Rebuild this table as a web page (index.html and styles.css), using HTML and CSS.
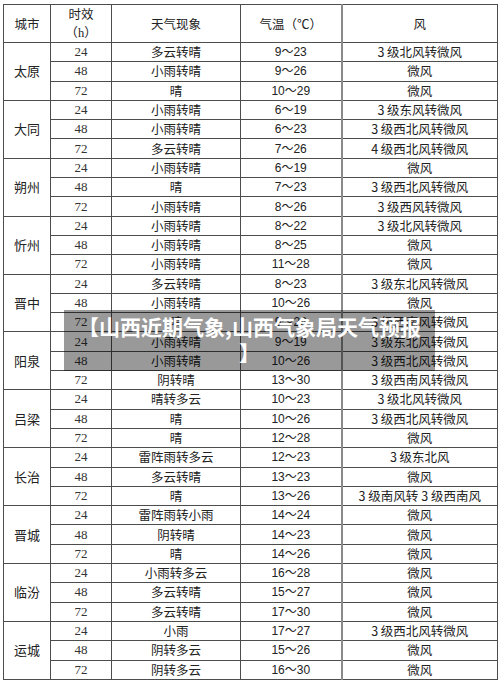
FILE: index.html
```html
<!DOCTYPE html>
<html lang="zh">
<head>
<meta charset="utf-8">
<link rel="stylesheet" href="styles.css">
</head>
<body>
<div class="page">
  <table class="wx">
    <colgroup>
      <col class="c-city"><col class="c-time"><col class="c-sky"><col class="c-temp"><col class="c-wind">
    </colgroup>
    <thead>
      <tr class="head">
        <th>城市</th>
        <th><span class="two">时效<br><span class="paren">（<span class="h">h</span>）</span></span></th>
        <th>天气现象</th>
        <th>气温（℃）</th>
        <th class="wind">风</th>
      </tr>
    </thead>
    <tbody id="rows"></tbody>
  </table>
  <div class="caption">【山西近期气象,山西气象局天气预报<br>】</div>
</div>
<script src="app.js"></script>
</body>
</html>
```
FILE: app.js
```js
const data = [
  ["太原", [["24","多云转晴","9～23","3 级北风转微风"],["48","小雨转晴","9～26","微风"],["72","晴","10～29","微风"]]],
  ["大同", [["24","小雨转晴","6～19","3 级东风转微风"],["48","小雨转晴","6～23","3 级西北风转微风"],["72","多云转晴","7～26","4 级西北风转微风"]]],
  ["朔州", [["24","小雨转晴","6～19","微风"],["48","晴","7～23","3 级西北风转微风"],["72","小雨转晴","8～26","3 级西风转微风"]]],
  ["忻州", [["24","小雨转晴","8～22","3 级北风转微风"],["48","小雨转晴","8～25","微风"],["72","小雨转晴","11～28","微风"]]],
  ["晋中", [["24","多云转晴","8～23","3 级东北风转微风"],["48","小雨转晴","10～26","微风"],["72","晴","9～26","3 级西南风转微风"]]],
  ["阳泉", [["24","小雨转晴","9～19","3 级东北风转微风"],["48","小雨转晴","10～26","3 级西北风转微风"],["72","阴转晴","13～30","3 级西南风转微风"]]],
  ["吕梁", [["24","晴转多云","10～23","3 级北风转微风"],["48","晴","10～26","3 级西北风转微风"],["72","晴","12～28","微风"]]],
  ["长治", [["24","雷阵雨转多云","12～23","3 级东北风"],["48","多云转晴","13～23","微风"],["72","晴","13～26","3 级南风转 3 级西南风"]]],
  ["晋城", [["24","雷阵雨转小雨","14～24","微风"],["48","阴转晴","14～23","微风"],["72","晴","14～26","微风"]]],
  ["临汾", [["24","小雨转多云","16～28","微风"],["48","多云转晴","15～27","微风"],["72","多云转晴","17～30","微风"]]],
  ["运城", [["24","小雨","17～27","3 级西北风转微风"],["48","阴转多云","15～26","微风"],["72","阴转多云","16～30","微风"]]]
];
const tb = document.getElementById("rows");
let html = "";
for (const [city, rows] of data) {
  rows.forEach((r, i) => {
    html += '<tr' + (i === 0 ? ' class="first"' : '') + '>';
    if (i === 0) html += '<td class="city" rowspan="3">' + city + '</td>';
    html += '<td class="time">' + r[0] + '</td><td class="sky">' + r[1] + '</td><td class="temp">' + r[2] + '</td><td class="wind">' + r[3] + '</td></tr>';
  });
}
tb.innerHTML = html;
```
FILE: styles.css
```css
html, body {
  margin: 0;
  padding: 0;
  background: #ffffff;
}
.page {
  position: relative;
  width: 500px;
  height: 683px;
  padding: 4px 0 0 3px;
  box-sizing: border-box;
  font-family: "Noto Sans CJK SC", "Noto Sans", sans-serif;
  color: #222;
}
.wx {
  border-collapse: collapse;
  table-layout: fixed;
  width: 494px;
  font-size: 12.5px;
}
.c-city { width: 47px; }
.c-time { width: 61px; }
.c-sky { width: 129px; }
.c-temp { width: 101px; }
.c-wind { width: 156px; }
.wx th, .wx td {
  border: 1px solid #4d4d4d;
  padding: 0;
  text-align: center;
  vertical-align: middle;
  font-weight: normal;
  line-height: 16px;
  white-space: nowrap;
  overflow: hidden;
}
.wx td { height: 18.3px; }
.head th { height: 37px; }
.wx .wind { border-left: 2px solid #8a8a8a; }
.two { display: inline-block; line-height: 18px; }
.h, .time { font-family: "Liberation Serif", serif; }
.time { font-size: 13px; color: #333; }
.temp { font-family: "Liberation Sans", "Noto Sans CJK SC", sans-serif; font-size: 12px; }
.city { font-size: 13px; }
.caption {
  position: absolute;
  left: 64px;
  top: 310px;
  width: 371px;
  height: 61px;
  box-sizing: border-box;
  padding-top: 3px;
  background: rgba(0, 0, 0, 0.4);
  color: #ffffff;
  font-weight: bold;
  font-size: 21px;
  line-height: 26px;
  text-align: center;
  white-space: nowrap;
}
```
